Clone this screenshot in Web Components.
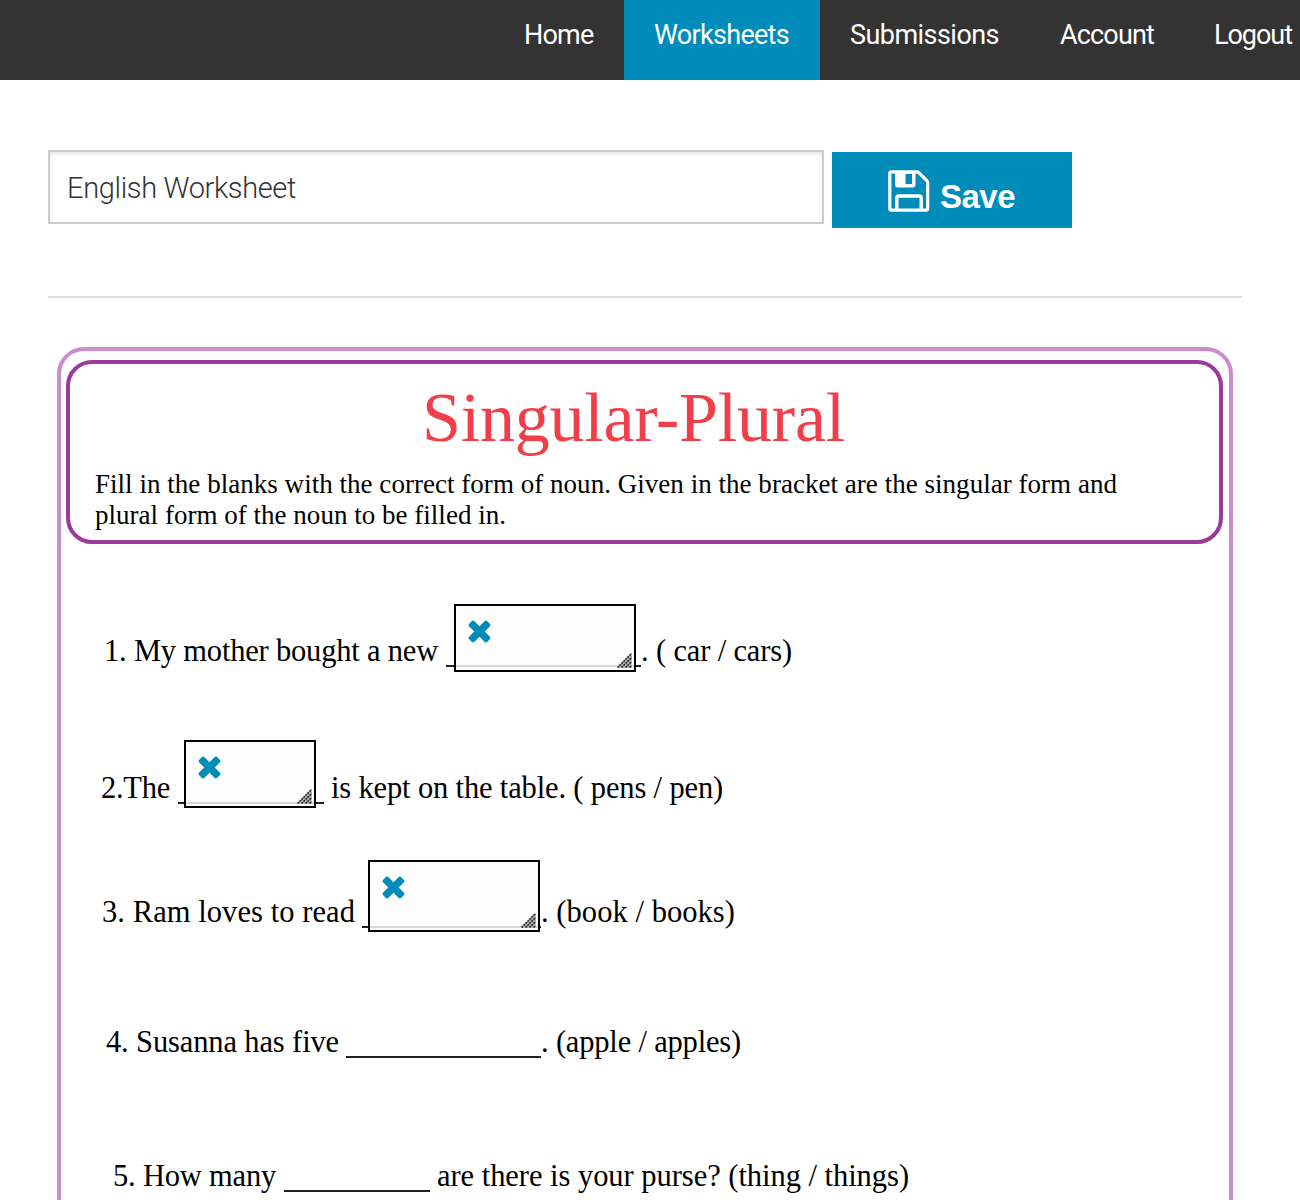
<!DOCTYPE html>
<html lang="en">
<head>
<meta charset="utf-8">
<title>Worksheets</title>
<style>
html,body{margin:0;height:1200px;overflow:hidden;background:#fff}
body{font-family:Roboto,"Liberation Sans",sans-serif}
</style>
</head>
<body>
<worksheet-page></worksheet-page>
<script>
const define=(name,css,html,ready)=>customElements.define(name,class extends HTMLElement{
  connectedCallback(){
    if(this.shadowRoot)return;
    this.attachShadow({mode:'open'}).innerHTML=`<style>*{box-sizing:border-box}${css}</style>${html}`;
    if(ready)ready(this);
  }
});

/* Text set to an exact measure by adjusting its tracking. */
define('fit-text',':host{display:inline-block;white-space:pre;flex:none}','<slot></slot>',el=>{
  const want=+el.getAttribute('measure'), have=el.getBoundingClientRect().width;
  el.style.letterSpacing=((want-have)/el.textContent.length)+'px';
  el.style.width=want+'px';
});

define('nav-item',`:host{display:block;flex:none;height:80px;padding:0 30px;color:#fff;font:400 27px/70px Roboto,sans-serif}
:host([active]){background:#008cba}`,'<slot></slot>');

define('nav-bar',':host{display:flex;justify-content:flex-start;height:80px;background:#333;padding-left:494px;overflow:hidden}',
`<nav-item style="width:130px"><fit-text measure="69.5">Home</fit-text></nav-item>
<nav-item active style="width:196px"><fit-text measure="135">Worksheets</fit-text></nav-item>
<nav-item style="width:210px"><fit-text measure="149">Submissions</fit-text></nav-item>
<nav-item style="width:154px"><fit-text measure="94">Account</fit-text></nav-item>
<nav-item><fit-text measure="78">Logout</fit-text></nav-item>`);

define('name-field',`:host{display:block;width:776px;height:74px;border:2px solid #ccc;box-shadow:inset 0 2px 4px rgba(0,0,0,.1);padding-left:17px;color:#333;font:300 29px/72px Roboto,sans-serif}`,'<slot></slot>');

define('save-button',`:host{display:flex;width:240px;height:76px;margin-top:2px;background:#008cba;color:#fff;padding:18px 0 0 56px;font:bold 33px/38px "Liberation Sans",sans-serif}
svg{flex:none;margin-right:10px}fit-text{margin-top:8px}`,
`<svg width="42" height="42" viewBox="0 0 42 42"><path d="M3 1.8H28.5Q30 1.8 31 2.8L38.6 10.4Q39.7 11.5 39.7 13V38.5Q39.7 40.2 38 40.2H3.2Q1.8 40.2 1.8 38.8V3Q1.8 1.8 3 1.8Z" fill="none" stroke="#fff" stroke-width="3.2" stroke-linejoin="round"/><path fill-rule="evenodd" fill="#fff" d="M7 2H27.5V14.5Q27.5 17.5 24.5 17.5H10Q7 17.5 7 14.5ZM17.5 4V14H24V4Z"/><path d="M8.8 40V28Q8.8 26 10.8 26H31.2Q33.2 26 33.2 28V40" fill="none" stroke="#fff" stroke-width="3.4"/></svg><fit-text measure="75">Save</fit-text>`);

/* Resizable answer box with a remove mark and a corner grip. */
define('answer-box',`:host{position:absolute;display:flex;flex-direction:column;justify-content:space-between;border:2px solid #000;background:rgba(253,253,253,.83);padding:14px 2px 2px 11.5px}
svg{display:block;flex:none}.grip{align-self:flex-end}`,
`<svg width="23" height="23" viewBox="-11.5 -11.5 23 23" fill="#008cba"><rect x="-12.8" y="-3.7" width="25.6" height="7.4" rx="2" transform="rotate(45)"/><rect x="-12.8" y="-3.7" width="25.6" height="7.4" rx="2" transform="rotate(-45)"/></svg>
<svg class="grip" width="15" height="15" viewBox="0 0 15 15"><path d="M0 15L15 0V15Z" fill="#bbb"/><path d="M0.5 14.5L14.5 .5M4.5 14.5L14.5 4.5M8.5 14.5L14.5 8.5M12.5 14.5L14.5 12.5" stroke="#333" stroke-width="1.8" stroke-dasharray="2.1 .7"/></svg>`);

define('blank-line',':host{display:block;position:relative;flex:none;height:36px;border-bottom:2px solid #222}','<slot></slot>');

define('question-row',':host{display:flex;align-items:flex-start;height:40px;color:#000;font:30.5px/40px "Liberation Serif",serif}','<slot></slot>');

define('sheet-header',`:host{display:block;margin:9px 6px 0 5px;height:184px;border:4px solid #9c3a9c;border-radius:26px;padding:14px 0 0 25px;color:#000;font:27px/31px "Liberation Serif",serif}
h1{margin:0 0 11px 327px;font:70px/80px "Liberation Serif",serif;color:#f23e48;height:80px}
p{margin:0;display:flex;flex-direction:column;align-items:flex-start}`,
`<h1><fit-text measure="423">Singular-Plural</fit-text></h1>
<p><fit-text measure="1022">Fill in the blanks with the correct form of noun. Given in the bracket are the singular form and</fit-text><fit-text measure="411">plural form of the noun to be filled in.</fit-text></p>`);

define('work-sheet',`:host{display:block;width:1176px;height:900px;margin:49px 0 0 9px;border:4px solid #cc8bcc;border-radius:27px;overflow:hidden}`,
`<sheet-header></sheet-header>
<question-row style="margin:87px 0 0 43px"><fit-text measure="334">1. My mother bought a new</fit-text><blank-line style="width:195px;margin-left:8px"><answer-box style="left:8px;top:-27px;width:182px;height:68px"></answer-box></blank-line><fit-text measure="151">. ( car / cars)</fit-text></question-row>
<question-row style="margin:97px 0 0 40px"><fit-text measure="69">2.The</fit-text><blank-line style="width:146px;margin-left:8px"><answer-box style="left:6px;top:-28px;width:132px;height:68px"></answer-box></blank-line><fit-text style="margin-left:7px" measure="392">is kept on the table. ( pens / pen)</fit-text></question-row>
<question-row style="margin:84px 0 0 41px"><fit-text measure="253">3. Ram loves to read</fit-text><blank-line style="width:179px;margin-left:7px"><answer-box style="left:6px;top:-32px;width:172px;height:72px"></answer-box></blank-line><fit-text measure="194">. (book / books)</fit-text></question-row>
<question-row style="margin:90px 0 0 45px"><fit-text measure="233">4. Susanna has five</fit-text><blank-line style="width:195px;margin-left:7px"></blank-line><fit-text measure="200">. (apple / apples)</fit-text></question-row>
<question-row style="margin:94px 0 0 52px"><fit-text measure="163">5. How many</fit-text><blank-line style="width:146px;margin-left:8px"></blank-line><fit-text style="margin-left:7px" measure="472">are there is your purse? (thing / things)</fit-text></question-row>`);

define('worksheet-page',`:host{display:block;width:1300px;height:1200px;overflow:hidden}
main{padding:70px 58px 0 48px}.bar{display:flex;gap:8px;height:146px}hr{border:0;height:2px;margin:0;background:#ddd}`,
`<nav-bar></nav-bar><main><div class="bar"><name-field><fit-text measure="229">English Worksheet</fit-text></name-field><save-button></save-button></div><hr><work-sheet></work-sheet></main>`);
</script>
</body>
</html>
